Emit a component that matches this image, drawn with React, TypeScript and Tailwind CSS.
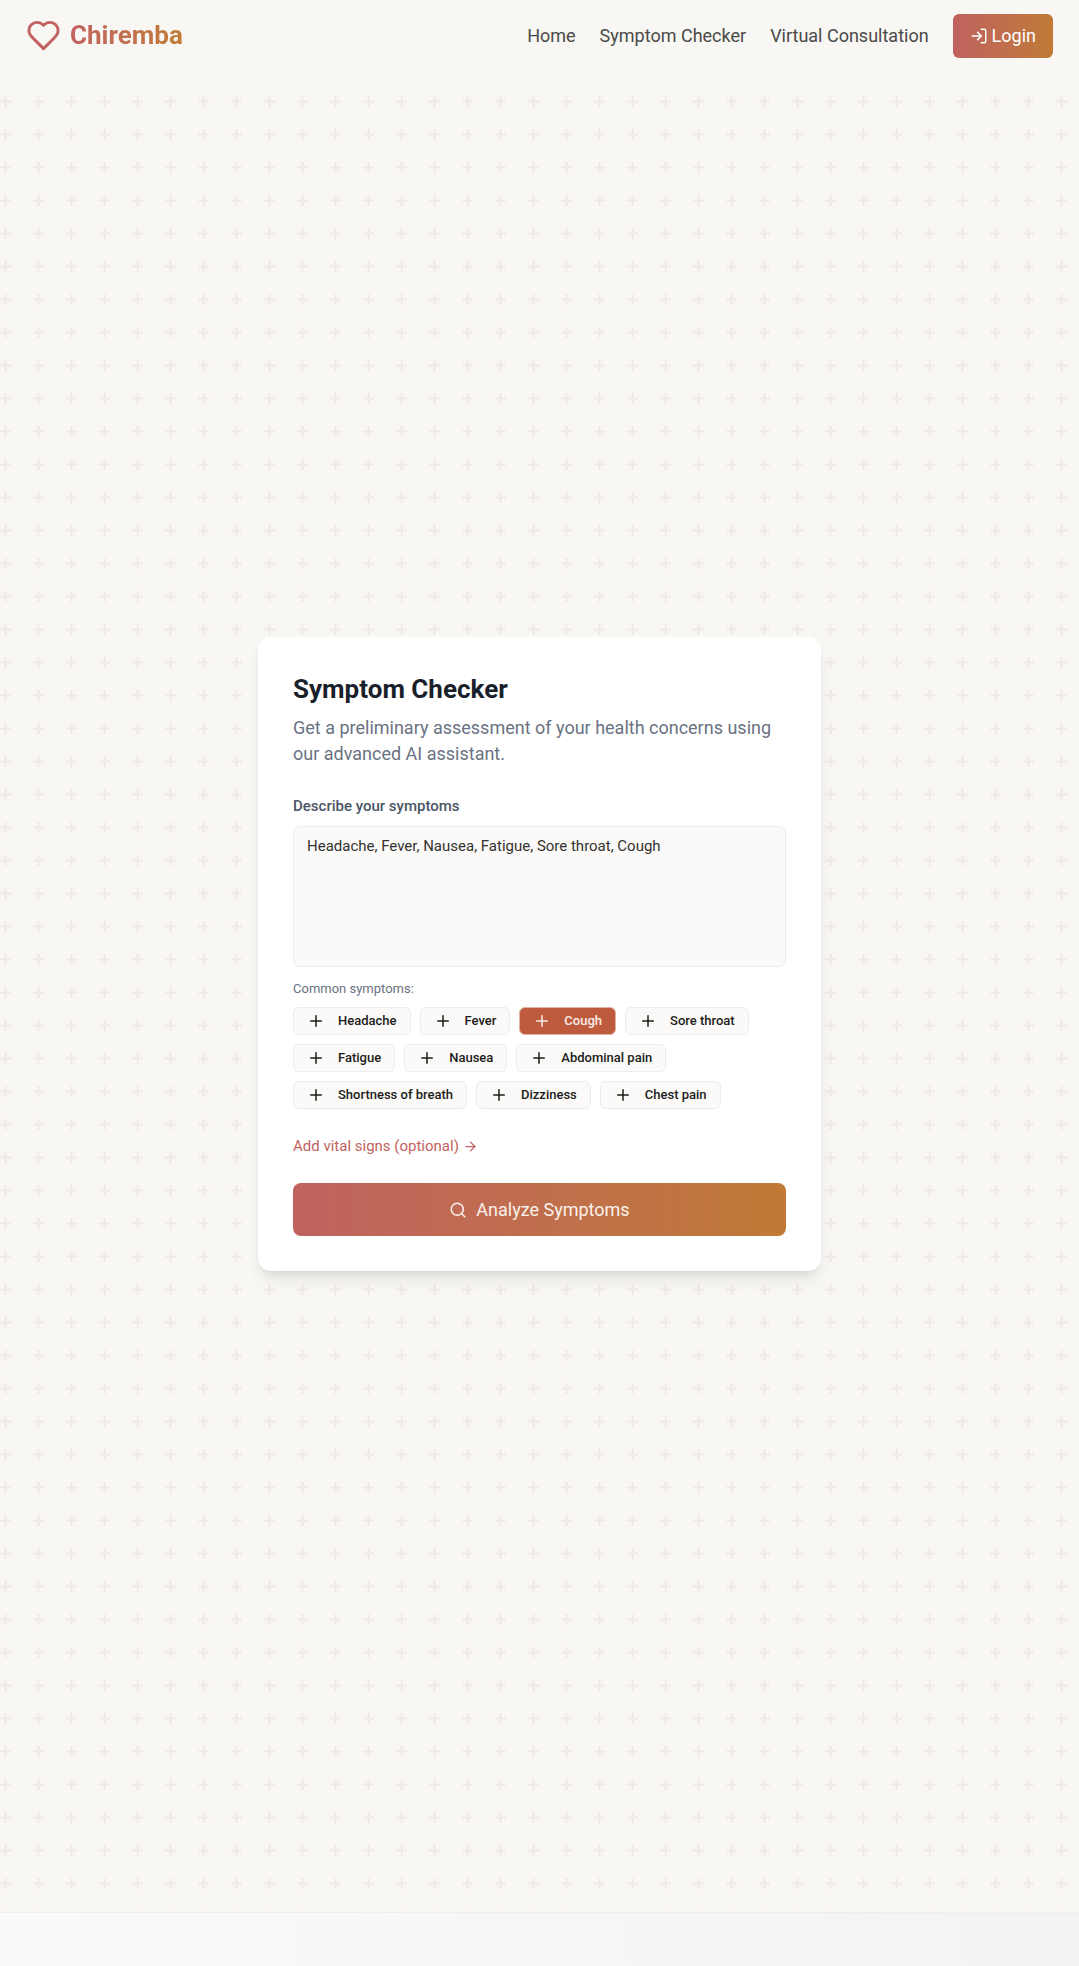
import { useState } from "react";

const symptoms = [
  "Headache",
  "Fever",
  "Cough",
  "Sore throat",
  "Fatigue",
  "Nausea",
  "Abdominal pain",
  "Shortness of breath",
  "Dizziness",
  "Chest pain",
];

const stroke = {
  viewBox: "0 0 24 24",
  fill: "none",
  stroke: "currentColor",
  strokeWidth: 2,
  strokeLinecap: "round",
  strokeLinejoin: "round",
  "aria-hidden": true,
} as const;

function HeartIcon() {
  return (
    <svg {...stroke} className="size-[35px] text-[#c26260]">
      <path d="M19 14c1.49-1.46 3-3.21 3-5.5A5.5 5.5 0 0 0 16.5 3c-1.76 0-3 .5-4.5 2-1.5-1.5-2.74-2-4.5-2A5.5 5.5 0 0 0 2 8.5c0 2.3 1.5 4.05 3 5.5l7 7Z" />
    </svg>
  );
}

function LoginIcon() {
  return (
    <svg {...stroke} className="size-[18px]">
      <path d="M15 3h4a2 2 0 0 1 2 2v14a2 2 0 0 1-2 2h-4" />
      <path d="m10 17 5-5-5-5" />
      <path d="M15 12H3" />
    </svg>
  );
}

function PlusIcon() {
  return (
    <svg {...stroke} className="size-[18px] shrink-0">
      <path d="M5 12h14" />
      <path d="M12 5v14" />
    </svg>
  );
}

function ArrowIcon() {
  return (
    <svg {...stroke} className="size-[15px]">
      <path d="M5 12h14" />
      <path d="m12 5 7 7-7 7" />
    </svg>
  );
}

function SearchIcon() {
  return (
    <svg {...stroke} className="size-[18px]">
      <circle cx="11" cy="11" r="8" />
      <path d="m21 21-4.3-4.3" />
    </svg>
  );
}

function PlusPattern() {
  return (
    <svg aria-hidden="true" className="pointer-events-none absolute inset-0 size-full">
      <defs>
        <pattern id="plus" y="-3" width="33" height="33" patternUnits="userSpaceOnUse" viewBox="0 0 30 30">
          <path fill="#c26260" fillOpacity="0.1" d="M6 4V0H4v4H0v2h4v4h2V6h4V4H6z" />
        </pattern>
      </defs>
      <rect width="100%" height="100%" fill="url(#plus)" />
    </svg>
  );
}

function Header() {
  return (
    <header className="fixed inset-x-0 top-0 z-10 flex h-[75px] items-center justify-between bg-[#f8f7f3] px-[26px] pb-1">
      <a href="#home" className="flex items-center gap-[9px]">
        <HeartIcon />
        <span className="bg-linear-to-r from-[#c26260] to-[#c17c34] bg-clip-text text-[26px] font-bold text-transparent">
          Chiremba
        </span>
      </a>
      <nav className="flex items-center gap-6 text-[18px] text-[#4a4a48]">
        <a href="#home">Home</a>
        <a href="#symptom-checker">Symptom Checker</a>
        <a href="#consultation">Virtual Consultation</a>
        <button
          type="button"
          className="flex h-11 items-center gap-1 rounded-md bg-linear-to-r from-[#c0625f] to-[#c07a35] px-[17px] text-white"
        >
          <LoginIcon />
          Login
        </button>
      </nav>
    </header>
  );
}

function SymptomCard() {
  const [text, setText] = useState("Headache, Fever, Nausea, Fatigue, Sore throat, Cough");
  const [active, setActive] = useState("Cough");

  return (
    <section className="relative w-full max-w-[563px] rounded-[13px] bg-white p-[35px] shadow-lg">
      <h1 className="text-[26px] leading-[35px] font-bold text-[#1a1f2c]">Symptom Checker</h1>
      <p className="mt-2 text-[18px] leading-[26px] text-gray-500">
        Get a preliminary assessment of your health concerns using our advanced AI assistant.
      </p>
      <label htmlFor="symptoms" className="mt-7 block text-[15px] leading-[22px] font-medium text-gray-600">
        Describe your symptoms
      </label>
      <textarea
        id="symptoms"
        value={text}
        onChange={(e) => setText(e.target.value)}
        className="mt-[9px] block h-[141px] w-full resize-none rounded-[7px] border border-[#ececea] bg-[#fbfaf8] px-[13px] py-2 text-[15px] leading-[22px] text-[#333330] outline-none"
      />
      <p className="mt-[13px] text-[13px] leading-[18px] text-gray-500">Common symptoms:</p>
      <div className="mt-[9px] flex flex-wrap gap-[9px]">
        {symptoms.map((name) => (
          <button
            key={name}
            type="button"
            aria-pressed={active === name}
            onClick={() => setActive(name)}
            className={
              active === name
                ? "flex h-7 items-center gap-[13px] rounded-md border border-[#e3b3a5] bg-[#bf5b3d] px-[13px] text-[13px] font-medium text-[#f8eeea]"
                : "flex h-7 items-center gap-[13px] rounded-md border border-[#ececea] bg-[#fbfaf8] px-[13px] text-[13px] font-medium text-[#1c1c1a]"
            }
          >
            <PlusIcon />
            {name}
          </button>
        ))}
      </div>
      <button type="button" className="mt-[26px] flex items-center gap-1 text-[15px] leading-[22px] text-[#c26260]">
        Add vital signs (optional)
        <ArrowIcon />
      </button>
      <button
        type="button"
        className="mt-[26px] flex h-[53px] w-full items-center justify-center gap-[9px] rounded-lg bg-linear-to-r from-[#c0625f] to-[#c07a35] text-[18px] text-[#fbf2ec]"
      >
        <SearchIcon />
        Analyze Symptoms
      </button>
    </section>
  );
}

export default function App() {
  return (
    <div className="flex min-h-screen flex-col bg-[#f8f7f3] font-['Roboto',sans-serif]">
      <Header />
      <main className="relative flex grow items-center justify-center px-4 pt-[71px] pb-[75px]">
        <PlusPattern />
        <SymptomCard />
      </main>
      <footer className="h-[54px] border-t border-[#eeeeec] bg-linear-to-r from-[#f9fafc] to-[#f2f3f5]" />
    </div>
  );
}
